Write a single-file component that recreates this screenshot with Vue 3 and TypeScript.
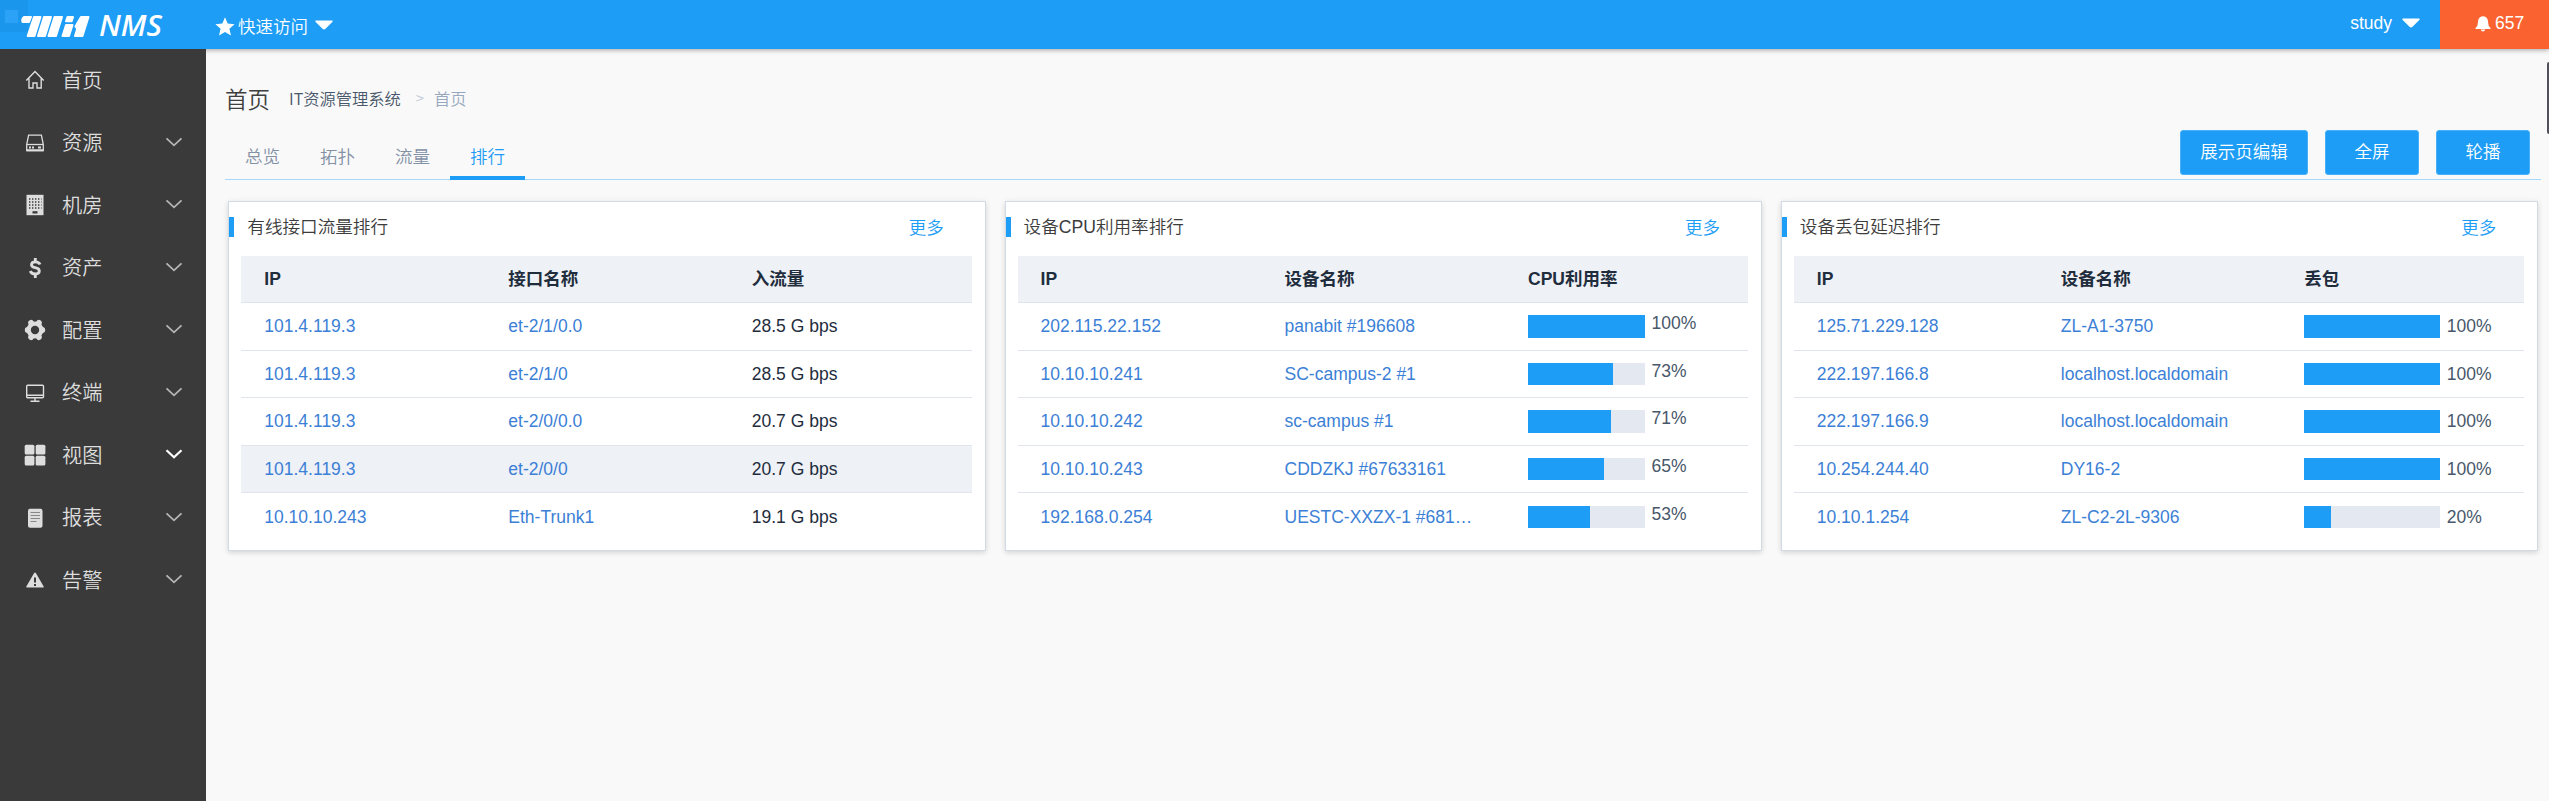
<script setup lang="ts">
interface MenuItem {
  label: string
  icon: string
  expandable: boolean
  bright?: boolean
}

interface Row {
  ip: string
  name: string
  value?: string
  percent?: number
  hover?: boolean
}

interface Panel {
  title: string
  columns: [string, string, string]
  kind: 'text' | 'cpu' | 'loss'
  rows: Row[]
}

const menu: MenuItem[] = [
  { label: '首页', icon: 'home', expandable: false },
  { label: '资源', icon: 'disk', expandable: true },
  { label: '机房', icon: 'building', expandable: true },
  { label: '资产', icon: 'dollar', expandable: true },
  { label: '配置', icon: 'gear', expandable: true },
  { label: '终端', icon: 'monitor', expandable: true },
  { label: '视图', icon: 'grid', expandable: true, bright: true },
  { label: '报表', icon: 'report', expandable: true },
  { label: '告警', icon: 'warning', expandable: true },
]

const tabs: string[] = ['总览', '拓扑', '流量', '排行']
const activeTab = '排行'
const actions: string[] = ['展示页编辑', '全屏', '轮播']

const panels: Panel[] = [
  {
    title: '有线接口流量排行',
    columns: ['IP', '接口名称', '入流量'],
    kind: 'text',
    rows: [
      { ip: '101.4.119.3', name: 'et-2/1/0.0', value: '28.5 G bps' },
      { ip: '101.4.119.3', name: 'et-2/1/0', value: '28.5 G bps' },
      { ip: '101.4.119.3', name: 'et-2/0/0.0', value: '20.7 G bps' },
      { ip: '101.4.119.3', name: 'et-2/0/0', value: '20.7 G bps', hover: true },
      { ip: '10.10.10.243', name: 'Eth-Trunk1', value: '19.1 G bps' },
    ],
  },
  {
    title: '设备CPU利用率排行',
    columns: ['IP', '设备名称', 'CPU利用率'],
    kind: 'cpu',
    rows: [
      { ip: '202.115.22.152', name: 'panabit #196608', percent: 100 },
      { ip: '10.10.10.241', name: 'SC-campus-2 #1', percent: 73 },
      { ip: '10.10.10.242', name: 'sc-campus #1', percent: 71 },
      { ip: '10.10.10.243', name: 'CDDZKJ #67633161', percent: 65 },
      { ip: '192.168.0.254', name: 'UESTC-XXZX-1 #681…', percent: 53 },
    ],
  },
  {
    title: '设备丢包延迟排行',
    columns: ['IP', '设备名称', '丢包'],
    kind: 'loss',
    rows: [
      { ip: '125.71.229.128', name: 'ZL-A1-3750', percent: 100 },
      { ip: '222.197.166.8', name: 'localhost.localdomain', percent: 100 },
      { ip: '222.197.166.9', name: 'localhost.localdomain', percent: 100 },
      { ip: '10.254.244.40', name: 'DY16-2', percent: 100 },
      { ip: '10.10.1.254', name: 'ZL-C2-2L-9306', percent: 20 },
    ],
  },
]
</script>

<template>
  <div class="app">
    <header class="topbar">
      <svg class="logo" width="206" height="49" viewBox="0 0 206 49">
        <rect width="28" height="32" fill="#1a97ec" />
        <rect x="5" y="10" width="13" height="13" fill="#2ba2f5" />
        <g fill="#fff" stroke="#fff" stroke-width="2" stroke-linejoin="round">
          <path d="M24 17H31L29 22H22.500Q21.500 19 24 17Z" />
          <path d="M34 17H40.500L34.500 36H27.700Z" />
          <path d="M44 17H51L45 36H38Z" />
          <path d="M54.500 17H62L56 36H48.500Z" />
          <path d="M67.500 17H73L71.700 21.300H66Z" />
          <path d="M66 25H72.500L69 36H62.500Z" />
          <path d="M81 17H88.500L82.500 36H75L77.300 28.500L75.500 26.500Z" />
        </g>
        <text x="99" y="36" textLength="63" lengthAdjust="spacingAndGlyphs" class="logo-text">NMS</text>
      </svg>
      <div class="quick">
        <svg width="20" height="19" viewBox="0 0 20 19"><path fill="#fff" d="M10 .3 12.700 6.500 19.600 7.200 14.400 11.700 16 18.500 10 14.900 4 18.500 5.600 11.700 .4 7.200 7.300 6.500Z" /></svg>
        <span>快速访问</span>
        <svg class="caret" width="18" height="10" viewBox="0 0 18 10"><path fill="#fff" d="M1 .5H17Q18.300 1 17.300 2L10.500 8.800Q9 10 7.500 8.800L.7 2Q-.3 1 1 .5Z" /></svg>
      </div>
      <div class="user">
        <span>study</span>
        <svg width="18" height="10" viewBox="0 0 18 10"><path fill="#fff" d="M1 .5H17Q18.300 1 17.300 2L10.500 8.800Q9 10 7.500 8.800L.7 2Q-.3 1 1 .5Z" /></svg>
      </div>
      <div class="alerts">
        <svg width="16" height="16" viewBox="0 0 16 16"><path fill="#fff" d="M6.500 .6Q8 -.3 9.500 .6Q13 1.800 13 6Q13 10 15.500 12V13H.5V12Q3 10 3 6Q3 1.800 6.500 .6ZM5.800 13.500H10.200Q10 15.500 8 15.500Q6 15.500 5.800 13.500Z" /></svg>
        <span>657</span>
      </div>
    </header>

    <div class="body">
      <nav class="sidebar">
        <div v-for="item in menu" :key="item.label" class="menu-item">
          <svg class="menu-icon" width="22" height="22" viewBox="0 0 22 22">
            <g v-if="item.icon === 'home'" fill="none" stroke="#ddd" stroke-width="1.400">
              <path d="M2.300 11.500 11 2.500 19.700 11.500M5 9.500V19H9V14H13V19H17.200V9.500" />
            </g>
            <g v-else-if="item.icon === 'disk'" fill="none" stroke="#ddd" stroke-width="1.300">
              <path d="M4.600 3.200H17.400L19.300 12.500V18.500H2.700V12.500Z" />
              <path d="M3 12.500H19" />
              <path d="M2.700 18.300H19.300" stroke-width="2" />
              <path d="M5 15.500H7M8 15.500H10M14 15.500H17" stroke-width="2.200" />
            </g>
            <g v-else-if="item.icon === 'building'">
              <path fill="#ddd" d="M2.500 .8H19.500V21.200H2.500Z" />
              <path stroke="#3a3a3a" stroke-width="1.300" stroke-dasharray="1.400 1.600" d="M5 5H17.500M5 8H17.500M5 11H17.500M5 14H17.500" />
              <path fill="#3a3a3a" d="M8.500 17.200H13.500V19.500H8.500Z" />
            </g>
            <g v-else-if="item.icon === 'dollar'" fill="none" stroke="#ddd">
              <path stroke-width="2.800" d="M16 7.500Q15 4.800 11.300 4.800Q7.500 4.800 7.500 7.700Q7.500 10 11.200 10.700Q15.300 11.400 15.300 14Q15.300 17 11.200 17Q7.300 17 6.300 14" />
              <path stroke-width="2.800" d="M11.300 1V5M11.300 17V21" />
            </g>
            <g v-else-if="item.icon === 'gear'">
              <circle cx="11" cy="11" r="6" fill="none" stroke="#ddd" stroke-width="5" />
              <path stroke="#ddd" stroke-width="5.800" stroke-linecap="round" d="M3.700 11H4.500M17.500 11H18.300M7.100 3.900 7.700 5M14.900 3.900 14.300 5M7.100 18.100 7.700 17M14.900 18.100 14.300 17" />
              <circle cx="11" cy="11" r="4.200" fill="#3a3a3a" />
            </g>
            <g v-else-if="item.icon === 'monitor'" fill="none" stroke="#ddd" stroke-width="1.400">
              <rect x="2.700" y="3.300" width="16.800" height="12.500" rx="1" />
              <path d="M3 13.300H19M11 16V19M6.500 19.300H15.500" />
            </g>
            <g v-else-if="item.icon === 'grid'" fill="#ddd">
              <rect x=".7" y=".7" width="9.700" height="9.700" rx="1.500" />
              <rect x="11.700" y=".7" width="9.700" height="9.700" rx="1.500" />
              <rect x=".7" y="11.700" width="9.700" height="9.700" rx="1.500" />
              <rect x="11.700" y="11.700" width="9.700" height="9.700" rx="1.500" />
            </g>
            <g v-else-if="item.icon === 'report'">
              <rect x="4" y="1.700" width="14.500" height="19" rx="2" fill="#ddd" />
              <path stroke="#888" stroke-width="1.200" d="M6.500 5.500H16M6.500 8.500H16M6.500 11.500H16M6.500 14.500H12.500" />
            </g>
            <g v-else>
              <path fill="#ddd" d="M11 3.500Q11.600 3.500 12 4.300L19.800 17.700Q20 18.500 19 18.500H3Q2 18.500 2.200 17.700L10 4.300Q10.400 3.500 11 3.500Z" />
              <path stroke="#3a3a3a" stroke-width="2" d="M11 8.500V13.500M11 15V17" />
            </g>
          </svg>
          <span class="menu-label">{{ item.label }}</span>
          <svg v-if="item.expandable" class="chevron" :class="{ bright: item.bright }" width="18" height="10" viewBox="0 0 18 10">
            <path d="M1.500 1.300 9 8.300 16.500 1.300" />
          </svg>
        </div>
      </nav>

      <main class="content">
        <div class="crumbs">
          <h1>首页</h1>
          <span class="crumb-root">IT资源管理系统</span>
          <span class="crumb-sep">&gt;</span>
          <span class="crumb-last">首页</span>
        </div>

        <div class="toolbar">
          <div class="tabs">
            <div v-for="tab in tabs" :key="tab" class="tab" :class="{ active: tab === activeTab }">{{ tab }}</div>
          </div>
          <div class="actions">
            <button v-for="a in actions" :key="a" type="button">{{ a }}</button>
          </div>
        </div>

        <div class="panels">
          <section v-for="panel in panels" :key="panel.title" class="panel">
            <div class="panel-head">
              <h2>{{ panel.title }}</h2>
              <a>更多</a>
            </div>
            <div class="table">
              <div class="row head">
                <div v-for="c in panel.columns" :key="c" class="cell">{{ c }}</div>
              </div>
              <div v-for="(row, i) in panel.rows" :key="i" class="row" :class="{ hover: row.hover }">
                <div class="cell link">{{ row.ip }}</div>
                <div class="cell link">{{ row.name }}</div>
                <div v-if="panel.kind === 'text'" class="cell">{{ row.value }}</div>
                <div v-else class="cell meter" :class="panel.kind">
                  <div class="track"><div class="fill" :style="{ width: row.percent + '%' }"></div></div>
                  <span class="pct">{{ row.percent }}%</span>
                </div>
              </div>
            </div>
          </section>
        </div>
        <div class="scroll-thumb"></div>
      </main>
    </div>
  </div>
</template>

<style>
body {
  margin: 0;
  overflow: hidden;
}
</style>

<style scoped>
.app {
  height: 801px;
  display: flex;
  flex-direction: column;
  background: #f9f9f9;
  font-family: "Liberation Sans", "Noto Sans CJK SC", sans-serif;
  font-size: 17.5px;
  color: #1f2d3d;
}

.topbar {
  position: relative;
  z-index: 2;
  flex: none;
  height: 49px;
  display: flex;
  background: #1d9df5;
  color: #fff;
  box-shadow: 0 1px 5px rgba(0, 0, 0, 0.35);
}

.logo-text {
  font: italic 600 28.500px "Open Sans", "Noto Sans", sans-serif;
  fill: #fff;
}

.quick {
  flex: 1;
  display: flex;
  align-items: center;
  padding: 4px 0 0 9px;
  font-weight: 350;
}

.quick span {
  margin: -2px 7px 0 3px;
}

.quick .caret {
  margin-bottom: 3px;
}

.user {
  display: flex;
  align-items: center;
  gap: 10px;
  padding: 0 20px 3px 0;
}

.user span {
  margin-top: 1px;
}

.alerts {
  width: 109px;
  box-sizing: border-box;
  display: flex;
  align-items: center;
  gap: 4px;
  padding: 0 0 2px 35px;
  background: #fa6330;
}

.body {
  flex: 1;
  min-height: 0;
  display: flex;
}

.sidebar {
  position: relative;
  z-index: 3;
  flex: none;
  width: 206px;
  background: #3a3a3a;
}

.menu-item {
  height: 62.500px;
  display: flex;
  align-items: center;
  padding: 0 23px 0 24px;
  color: #ddd;
  font-size: 20.200px;
  font-weight: 350;
}

.menu-label {
  flex: 1;
  margin: 1px 0 0 16px;
  line-height: 30px;
}

.chevron {
  fill: none;
  stroke: #b5b5b5;
  stroke-width: 1.800;
  margin: -2px 0 0;
}

.chevron.bright {
  stroke: #fff;
  stroke-width: 2.200;
}

.content {
  position: relative;
  flex: 1;
  min-width: 0;
  padding: 0 8px 0 19px;
}

.crumbs {
  height: 81px;
  display: flex;
  align-items: center;
  box-sizing: border-box;
  padding-top: 16px;
  font-family: "Noto Sans CJK SC", sans-serif;
  font-size: 16.250px;
  font-weight: 350;
}

.crumbs h1 {
  margin: 0;
  width: 64px;
  font-size: 22.500px;
  font-weight: 350;
  color: #3f3f3f;
}

.crumb-root {
  color: #48576a;
}

.crumb-sep {
  margin: 0 10px 0 15px;
  color: #bfcbd9;
  font-size: 15px;
}

.crumb-last {
  color: #97a8be;
}

.toolbar {
  height: 49px;
  display: flex;
  justify-content: space-between;
  border-bottom: 1px solid #a5d8fb;
}

.tabs {
  display: flex;
}

.tab {
  width: 75px;
  height: 50px;
  box-sizing: border-box;
  padding-top: 2px;
  line-height: 50px;
  text-align: center;
  color: #8391a5;
  font-weight: 350;
}

.tab.active {
  color: #1d9df5;
  border-bottom: 4px solid #1d9df5;
}

.actions {
  display: flex;
  gap: 17px;
  padding-right: 11px;
}

.actions button {
  width: 94px;
  height: 45px;
  padding: 0 0 4px;
  border: 1px solid #49b0f7;
  border-radius: 3px;
  background: #1d9df5;
  color: #fff;
  font: 350 17.500px "Noto Sans CJK SC", sans-serif;
}

.actions button:first-child {
  width: 128px;
}

.panels {
  display: grid;
  grid-template-columns: repeat(3, 757.500px);
  gap: 18.750px;
  margin: 21px 0 0 3.300px;
}

.panel {
  box-sizing: border-box;
  height: 350px;
  background: #fff;
  border: 1px solid #d1dbe5;
  box-shadow: 0 2px 5px rgba(0, 0, 0, 0.12), 0 0 8px rgba(0, 0, 0, 0.04);
}

.panel-head {
  height: 54px;
  display: flex;
  justify-content: space-between;
  align-items: flex-start;
}

.panel-head h2 {
  margin: 15px 0 0;
  padding-left: 13px;
  height: 20px;
  line-height: 20px;
  border-left: 5px solid #1d9df5;
  font-size: 17.600px;
  font-weight: 350;
  color: #3c3c3c;
}

.panel-head a {
  margin: 16px 41px 0 0;
  line-height: 20px;
  color: #1d9df5;
  font-weight: 350;
}

.table {
  margin: 0 13px 0 12px;
}

.row {
  height: 47.500px;
  box-sizing: border-box;
  display: grid;
  grid-template-columns: 244px 243.500px 1fr;
  align-items: center;
  border-bottom: 1px solid #dfe4ed;
}

.row.head {
  height: 47px;
  background: #eef1f6;
  font-weight: 700;
}

.row.hover {
  background: #eef1f6;
}

.row:last-child {
  border-bottom: 0;
}

.cell {
  padding-left: 23px;
  line-height: 24px;
  white-space: nowrap;
}

.link {
  color: #3c7fd6;
}

.meter {
  display: flex;
  align-items: center;
}

.track {
  height: 22.500px;
  background: #e4e8f1;
}

.cpu .track {
  width: 117px;
}

.loss .track {
  width: 136px;
}

.fill {
  height: 100%;
  background: #1d9df5;
}

.pct {
  margin-left: 6.500px;
  color: #48576a;
}

.cpu .pct {
  margin-top: -6px;
}

.scroll-thumb {
  position: absolute;
  top: 13px;
  right: 0;
  width: 2px;
  height: 72px;
  border-radius: 2px 0 0 2px;
  background: #50515c;
}
</style>
